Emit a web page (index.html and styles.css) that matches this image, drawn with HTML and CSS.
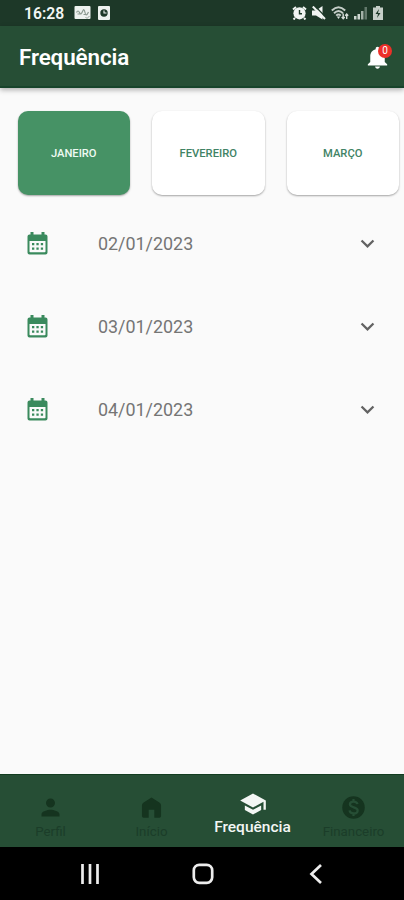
FILE: index.html
```html
<!DOCTYPE html>
<html lang="pt-BR">
<head>
  <meta charset="UTF-8" />
  <title>Frequência</title>
  <meta name="viewport" content="width=device-width, initial-scale=1.0" />
  <link rel="stylesheet" href="styles.css">
</head>
<body>

<div class="app">
  <!-- Status bar -->
  <div class="status-bar">
    <span class="time">16:28</span>
    <svg class="status-photo" viewBox="0 0 16 14">
      <rect width="16" height="13" rx="1" fill="#eef2ef"/>
      <path d="M2 6.5q1.500-3 3 0t3-1 2.500 1 3.500-.5M3 8h4M9 8.500h2" fill="none" stroke="#8b9990" stroke-width="1.200"/>
      <path d="M11 11l1.500 1.500L15 10" fill="none" stroke="#93a198"/>
    </svg>
    <svg class="status-clock" viewBox="0 0 12 14">
      <rect width="12" height="14" rx="1" fill="#eef2ef"/>
      <circle cx="6" cy="7" r="3.700" fill="#1d3828"/>
      <path d="M6 4.500V7h2.500" fill="none" stroke="#eef2ef" stroke-width="1.100"/>
    </svg>
    <div class="status-right">
      <svg width="15" height="14" viewBox="0 0 15 14">
        <path d="M1 3.500L4 1M14 3.500L11 1M3 12l-1.500 1.500M12 12l1.500 1.500" stroke="#f1f4f2" stroke-width="2"/>
        <circle cx="7.500" cy="7.300" r="6.100" fill="#f1f4f2"/>
        <path d="M7.500 4v3.700H10" fill="none" stroke="#1d3828" stroke-width="1.400"/>
      </svg>
      <svg width="14" height="14" viewBox="0 0 14 14">
        <path d="M0 4.500h4L10.500 0v13.500L4 9.500H0z" fill="#f1f4f2"/>
        <path d="M3 0L14 11.500" stroke="#1d3828" stroke-width="1.300"/>
        <path d="M.8 .5L13 13" stroke="#f1f4f2" stroke-width="2"/>
      </svg>
      <svg class="wifi" width="18" height="14" viewBox="0 0 18 14">
        <path d="M.8 4.500q6.700-6.500 13.400 0M3 7.200q4.500-4.400 9 0M5.200 9.700q2.300-2.300 4.600 0" fill="none" stroke="#c5cec8" stroke-width="1.900"/>
        <path d="M5.800 10.500L7.500 13 9.200 10.500z" fill="#d5ddd8"/>
        <path d="M12.200 7.500v5M10.700 11l1.500 1.700 1.500-1.700M15.700 13V8M14.200 9.700L15.700 8l1.500 1.700" fill="none" stroke="#d5ddd8" stroke-width="1.400"/>
      </svg>
      <svg class="signal" width="13" height="14" viewBox="0 0 13 14">
        <path d="M0 10h2.500v3.500H0zM3.500 8H6v5.500H3.500z" fill="#ccd5cf"/>
        <path d="M7 5h2.500v8.500H7z" fill="#a3b1a8"/>
        <path d="M10.500 1H13v12.500h-2.500z" fill="#62786b"/>
      </svg>
      <svg width="10" height="14" viewBox="0 0 10 14">
        <path d="M3 0h4v1.500h3V14H0V1.500h3z" fill="#c5cec8"/>
        <path d="M6 3L2.500 8H5l-1 4 3.500-5H5z" fill="#1d3828"/>
      </svg>
    </div>
  </div>

  <!-- Header -->
  <header class="header">
    <h1>Frequência</h1>
    <div class="bell">
      <svg width="29" height="27" viewBox="0 0 24 24" preserveAspectRatio="none" fill="#fff">
        <path d="M12 22c1.100 0 2-.9 2-2h-4c0 1.100.89 2 2 2zm6-6v-5c0-3.070-1.640-5.640-4.500-6.320V4c0-.83-.67-1.500-1.500-1.500s-1.500.67-1.500 1.500v.68C7.630 5.360 6 7.920 6 11v5l-2 2v1h16v-1l-2-2z"/>
      </svg>
      <span class="badge">0</span>
    </div>
  </header>

  <main class="content">
    <div class="months">
      <button class="month active">JANEIRO</button>
      <button class="month">FEVEREIRO</button>
      <button class="month">MARÇO</button>
    </div>

    <div class="days">
      <div class="day">
        <svg class="calendar" viewBox="0 0 21 23"><use href="#calendar"/></svg>
        <span>02/01/2023</span>
        <svg class="chevron" viewBox="0 0 24 24"><use href="#chevron"/></svg>
      </div>
      <div class="day">
        <svg class="calendar" viewBox="0 0 21 23"><use href="#calendar"/></svg>
        <span>03/01/2023</span>
        <svg class="chevron" viewBox="0 0 24 24"><use href="#chevron"/></svg>
      </div>
      <div class="day">
        <svg class="calendar" viewBox="0 0 21 23"><use href="#calendar"/></svg>
        <span>04/01/2023</span>
        <svg class="chevron" viewBox="0 0 24 24"><use href="#chevron"/></svg>
      </div>
    </div>
  </main>

  <!-- Tabs -->
  <nav class="tabs">
    <div class="tab">
      <svg viewBox="0 0 24 24"><path d="M12 12c2.210 0 4-1.790 4-4s-1.790-4-4-4-4 1.790-4 4 1.790 4 4 4zm0 2c-2.670 0-8 1.340-8 4v2h16v-2c0-2.660-5.330-4-8-4z"/></svg>
      <span>Perfil</span>
    </div>
    <div class="tab">
      <svg viewBox="0 0 24 24"><path d="M12 3L5 7.500Q3.500 8.500 3.500 10v9.500Q3.500 21 5 21h4.500v-7h5v7H19q1.500 0 1.500-1.500V10q0-1.500-1.500-2.500z"/></svg>
      <span>Início</span>
    </div>
    <div class="tab active">
      <svg viewBox="0 0 24 24"><path d="M5 13.180v4L12 21l7-3.820v-4L12 17l-7-3.820zM12 3L1 9l11 6 9-4.910V17h2V9L12 3z"/></svg>
      <span>Frequência</span>
    </div>
    <div class="tab">
      <svg viewBox="0 0 24 24">
        <circle cx="12" cy="12" r="10"/>
        <path class="dollar" d="M15.500 9c-.3-1.600-1.700-2.300-3.400-2.300-2 0-3.300 1-3.300 2.500 0 3.600 6.900 1.700 6.900 5.400 0 1.700-1.500 2.700-3.500 2.700s-3.500-.9-3.700-2.700M12 4.500v2.300M12 17v2.500"/>
      </svg>
      <span>Financeiro</span>
    </div>
  </nav>

  <!-- Android buttons -->
  <div class="system-nav">
    <svg width="20" height="20" viewBox="0 0 20 20"><path d="M2.500 0v20M10 0v20M17.500 0v20"/></svg>
    <svg width="22" height="22" viewBox="0 0 22 22"><rect x="1.800" y="1.800" width="18.400" height="18" rx="5.500"/></svg>
    <svg width="20" height="20" viewBox="0 0 20 20"><path d="M15 1L5.500 10l9.500 9"/></svg>
  </div>
</div>

<svg class="hidden">
  <symbol id="calendar" viewBox="0 0 21 23">
    <path fill-rule="evenodd" d="M3.500 0h3v2.500h8V0h3v2.500h1q2 0 2 2v16q0 2-2 2h-16q-2 0-2-2v-16q0-2 2-2h1zM2.500 9v10.500q0 .8.800.8h14.400q.8 0 .8-.8V9z"/>
    <path d="M5 11h2.300v2.300H5zM9.400 11h2.300v2.300H9.400zM13.800 11h2.300v2.300h-2.300zM5 15.500h2.300v2.300H5zM9.400 15.500h2.300v2.300H9.400zM13.800 15.500h2.300v2.300h-2.300z"/>
  </symbol>
  <symbol id="chevron" viewBox="0 0 24 24">
    <path d="M7.410 8.590L12 13.170l4.590-4.580L18 10l-6 6-6-6z"/>
  </symbol>
</svg>

</body>
</html>
```
FILE: styles.css
```css
* { box-sizing: border-box; }
body {
  margin: 0;
  font-family: Roboto, sans-serif;
  background: #fafafa;
}
svg {
  display: block;
  flex-shrink: 0;
}
.hidden {
  display: none;
}
.app {
  height: 900px;
  display: flex;
  flex-direction: column;
  overflow: hidden;
}
.status-bar {
  height: 26px;
  flex-shrink: 0;
  display: flex;
  align-items: center;
  padding: 0 21px 0 24px;
  background: #1d3828;
  color: #f3f6f4;
}
.time {
  width: 50px;
  font-size: 15.7px;
  font-weight: 600;
}
.status-photo {
  width: 17px;
  height: 14px;
}
.status-clock {
  width: 12px;
  height: 14px;
  margin-left: 7px;
}
.status-right {
  display: flex;
  align-items: center;
  gap: 5px;
  margin-left: auto;
}
.signal {
  margin-right: 1px;
}
.header {
  height: 62px;
  flex-shrink: 0;
  display: flex;
  align-items: center;
  justify-content: space-between;
  padding: 2px 12px 0 19px;
  background: #264e35;
  border-bottom: 2px solid #17442b;
  color: #fff;
  box-shadow: 0 2px 5px rgba(0,0,0,0.3);
}
h1 {
  margin: 0;
  font-size: 22.4px;
  font-weight: 600;
  letter-spacing: -0.1px;
}
.bell {
  position: relative;
}
.badge {
  position: absolute;
  top: 0;
  right: 0;
  width: 14px;
  height: 14px;
  border-radius: 50%;
  background: #ec3029;
  font-size: 10px;
  line-height: 14px;
  text-align: center;
}
.content {
  flex: 1;
  overflow: hidden;
}
.months {
  display: flex;
  gap: 22px;
  padding: 23px 0 0 17.5px;
}
.month {
  width: 112.5px;
  height: 84px;
  flex-shrink: 0;
  padding: 0;
  border: none;
  border-radius: 10px;
  background: #fff;
  color: #418365;
  font-family: inherit;
  font-size: 11.2px;
  font-weight: 500;
  box-shadow: 0 1px 2px rgba(0,0,0,0.35);
}
.month.active {
  background: #469265;
  color: #effaf3;
}
.days {
  padding-top: 7px;
}
.day {
  height: 83px;
  display: flex;
  align-items: center;
  padding: 0 23px 0 27px;
  color: #757575;
  font-size: 17.9px;
}
.day span {
  flex: 1;
  margin-left: 50px;
}
.calendar {
  width: 21px;
  height: 23px;
  fill: #3a8a5d;
}
.chevron {
  width: 27px;
  height: 27px;
  fill: #626262;
}
.tabs {
  height: 73px;
  flex-shrink: 0;
  display: flex;
  background: #264e35;
  border-top: 1px solid #123c20;
}
.tab {
  flex: 1;
  display: flex;
  flex-direction: column;
  align-items: center;
  padding-top: 19px;
  color: #1b3d29;
  font-size: 13.3px;
  line-height: 18px;
}
.tab svg {
  width: 27px;
  height: 27px;
  fill: #15341f;
}
.tab span {
  margin-top: 2px;
}
.tab .dollar {
  fill: none;
  stroke: #264e35;
  stroke-width: 2;
}
.tab.active {
  padding-top: 15px;
  color: #f3f6f4;
  font-size: 15.5px;
  font-weight: 500;
}
.tab.active svg {
  width: 28px;
  height: 28px;
  fill: #f3f6f4;
}
.tab.active span {
  margin-top: 0;
}
.system-nav {
  height: 53px;
  flex-shrink: 0;
  display: flex;
  align-items: center;
  justify-content: space-between;
  padding: 0 78px 0 80px;
  background: #000;
}
.system-nav svg {
  fill: none;
  stroke: #ededed;
  stroke-width: 2.7;
}
```
